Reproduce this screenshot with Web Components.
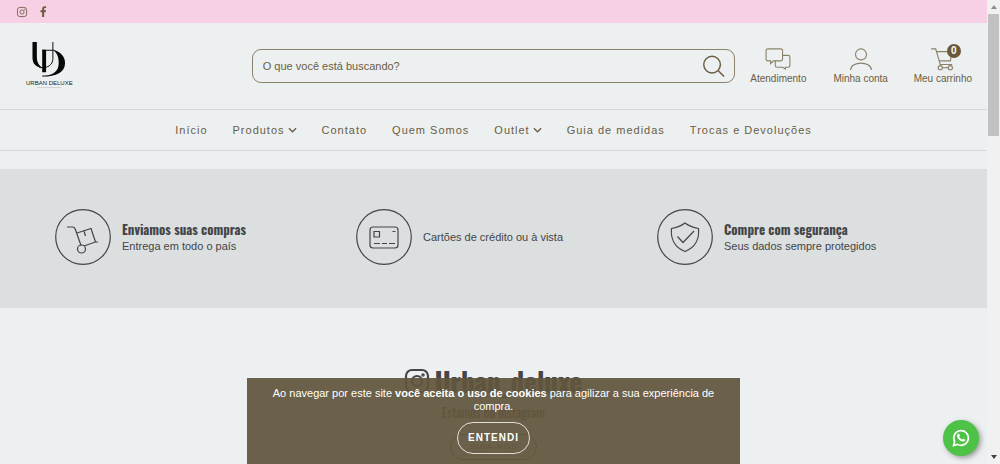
<!DOCTYPE html>
<html lang="pt-BR">
<head>
<meta charset="utf-8">
<title>Urban Deluxe</title>
<style>
html, body { margin: 0; height: 100%; }
body {
  --bg: #ecf0f1; --brown: #6b5d43; --ink: #444547; --line: #d5d8d8;
  --condensed: "Oswald", "Liberation Sans Narrow", "Liberation Sans", sans-serif;
  font: 11px/16px "Liberation Sans", Arial, sans-serif;
  color: var(--brown); background: var(--bg); overflow: hidden;
}
</style>
</head>
<body>
<shop-page>
  <top-bar></top-bar>
  <shop-header></shop-header>
  <shop-nav></shop-nav>
  <feature-band>
    <shop-feature icon="truck"><strong slot="title">Enviamos suas compras</strong>Entrega em todo o país</shop-feature>
    <shop-feature icon="card">Cartões de crédito ou à vista</shop-feature>
    <shop-feature icon="shield"><strong slot="title">Compre com segurança</strong>Seus dados sempre protegidos</shop-feature>
  </feature-band>
  <insta-section></insta-section>
  <cookie-notice slot="overlay">Ao navegar por este site <b>você aceita o uso de cookies</b> para agilizar a sua experiência de compra.</cookie-notice>
  <whats-button slot="overlay"></whats-button>
</shop-page>
<script>
const icons = {
  instagram: ['0 0 24 24', '<rect x="1" y="1" width="22" height="22" rx="6"/><circle cx="12" cy="12" r="5"/><circle cx="18" cy="6" r=".7" fill="currentColor"/>'],
  facebook: ['0 0 10 16', '<path stroke="none" fill="currentColor" d="M3 16V9H.6V6.2H3V4.1C3 1.6 4.4.3 6.6.3c1 0 2.1.2 2.1.2v2.3H7.5C6.3 2.8 6 3.500 6 4.3v1.9h2.7L8.200 9H6v7z"/>'],
  search: ['0 0 24 24', '<circle cx="10.500" cy="10" r="8.700"/><path d="M17 16.500l6 6"/>'],
  chat: ['0 0 28 24', '<path d="M3 1h14q2 0 2 2v9q0 2-2 2H9l-3 3v-3H3q-2 0-2-2V3q0-2 2-2z"/><path d="M19 8h6q2 0 2 2v9q0 2-2 2h-3v2l-3-2h-6q-2 0-2-2v-5"/>'],
  user: ['0 0 24 24', '<circle cx="12" cy="7" r="6"/><path d="M.5 24c1-10 22-10 23 0"/>'],
  cart: ['0 0 26 24', '<path d="M0 1h5l5 17h13M6 4h17l-2 10H9"/><circle cx="10" cy="21.500" r="2.300"/><circle cx="21" cy="21.500" r="2.300"/><path d="M12 21.500h7"/>'],
  chevron: ['0 0 10 6', '<path d="M1 1l4 4 4-4"/>'],
  truck: ['0 0 56 56', '<circle cx="28" cy="28" r="27.300"/><path d="M12 18h5.500q2 0 2.700 2L26 36.500M22 24l14-4.500L40.500 33 29 37M29 22l1.500 5M40 33h3"/><circle cx="26.500" cy="40" r="4"/>'],
  card: ['0 0 56 56', '<circle cx="28" cy="28" r="27.300"/><rect x="14" y="18" width="28" height="21" rx="3"/><path d="M18 22.500h5.500v5.500H18zM36.500 22.500h3M18 34.500h6M26 34.500h5M33 34.500h6"/>'],
  shield: ['0 0 56 56', '<circle cx="28" cy="28" r="27.300"/><path d="M28 14c4 3 8 4.500 13.500 5.500 1 10-3 19-13.500 23C17.500 38.500 13.500 29.500 14.500 19.500 20 18.500 24 17 28 14z"/><path d="M20.500 27.500l5.500 6L37 22"/>'],
  whatsapp: ['0 0 24 24', '<path stroke-width="2.200" d="M2 22l1.500-5.300A9.800 9.800 0 1 1 7.300 20.500z"/><path stroke="none" fill="currentColor" d="M8.200 6.600c.4-.4 1.200-.4 1.400.1l.9 2.100c.2.500-.9 1.300-.7 1.700.8 1.600 2 2.800 3.700 3.500.5.200 1.200-1.200 1.700-1l2.100 1c.5.300.4 1.200-.1 1.800-1 1.200-2.700 1.300-4.700.4-2.500-1.100-4.400-3-5.500-5.200-.8-1.800-.1-3.500 1.200-4.400z"/>'],
  logo: ['0 0 34 36', '<path stroke="none" fill="#080808" d="M0 0h4.500v16c0 5 2 8 5.500 10.500C3 26 0 22 0 16zM10 8h4v23h-4zM21 8c8 2 12.500 7 12.500 13.500C33.500 31 25 35.500 10 35.500v-1c11 0 17-4 17-13C27 15 25 11 21 8z"/><path stroke="#080808" stroke-width="1" d="M10 8.500h12M7 26.300c9 1 14-3 14-9.300V0"/>']
};
const define = (name, html, setup) => {
  const template = document.createElement('template');
  template.innerHTML = html;
  customElements.define(name, class extends HTMLElement {
    constructor() {
      super();
      this.attachShadow({ mode: 'open' }).append(template.content.cloneNode(true));
    }
    connectedCallback() { if (setup) setup(this, this.shadowRoot); }
  });
};
const fillIcon = (el, root) => {
  root.querySelector('.icon').innerHTML = '<ui-icon name="' + el.getAttribute('icon') + '"></ui-icon>';
};

define('ui-icon', `<style>
  :host { display: block; flex: none; }
  svg { display: block; width: 100%; height: 100%; fill: none; stroke: currentColor; stroke-width: var(--stroke, 1.2); overflow: visible; }
</style><svg aria-hidden="true"></svg>`, (el, root) => {
  const [box, shapes] = icons[el.getAttribute('name')];
  const svg = root.querySelector('svg');
  svg.setAttribute('viewBox', box);
  svg.innerHTML = shapes;
});

define('scroll-rail', `<style>
  :host { display: flex; flex-direction: column; align-items: center; width: 13px; flex: none; background: #f1f1f1; }
  i { border: 3px solid transparent; }
  .up { border-top: 0; border-bottom: 4px solid #8c8c8c; margin-top: 5px; }
  .down { border-bottom: 0; border-top: 4px solid #404040; margin-bottom: 5px; }
  .track { flex: 1; width: 11px; margin: 5px 0; }
  .thumb { height: 28%; background: #c1c1c1; }
</style><i class="up"></i><div class="track"><div class="thumb"></div></div><i class="down"></i>`);

define('shop-page', `<style>
  :host { display: flex; height: 100vh; }
  main { flex: 1; min-width: 0; position: relative; overflow: hidden; }
</style><main><slot></slot><slot name="overlay"></slot></main><scroll-rail></scroll-rail>`);

define('top-bar', `<style>
  :host { display: flex; align-items: center; gap: 13px; height: 23px; padding: 0 17px; background: #f7d0e6; }
  a { color: inherit; }
  .insta { width: 10px; height: 10px; --stroke: 2; }
  .face { width: 7px; height: 11px; }
</style><a href="#" aria-label="Instagram"><ui-icon class="insta" name="instagram"></ui-icon></a><a href="#" aria-label="Facebook"><ui-icon class="face" name="facebook"></ui-icon></a>`);

define('shop-logo', `<style>
  :host { display: block; }
  a { display: inline-flex; flex-direction: column; align-items: center; color: #222; text-decoration: none; font-size: 6px; line-height: 8px; }
  ui-icon { width: 34px; height: 35px; margin-bottom: 2px; }
  i { width: 24px; height: 1px; background: #d0d3d4; }
</style><a href="#"><ui-icon name="logo"></ui-icon>URBAN DELUXE<i></i></a>`);

define('search-box', `<style>
  :host { display: block; }
  form { display: flex; align-items: center; height: 34px; box-sizing: border-box; border: 1px solid #8d826b; border-radius: 9px; padding: 0 9px 0 10px; }
  input { flex: 1; min-width: 0; border: 0; padding: 0; background: none; outline: 0; font: inherit; color: inherit; }
  input::placeholder { color: inherit; opacity: 1; }
  button { border: 0; padding: 0; background: none; color: inherit; }
  ui-icon { width: 23px; height: 23px; --stroke: 1.5; }
</style><form><input aria-label="Buscar" placeholder="O que você está buscando?"><button type="button" aria-label="Buscar"><ui-icon name="search"></ui-icon></button></form>`);

define('header-link', `<style>
  :host { display: block; flex: 1; }
  a { display: flex; flex-direction: column; align-items: center; color: inherit; text-decoration: none; font-size: 10px; line-height: 14px; white-space: nowrap; }
  .pic { position: relative; margin-bottom: 2px; }
  .icon { width: 26px; height: 22px; color: #8b816b; }
  ui-icon { width: 100%; height: 100%; }
  ::slotted(*) { position: absolute; left: 17px; top: -4px; width: 14px; border-radius: 7px; background: #6b5838; color: #fff; font-weight: bold; text-align: center; }
</style><a href="#"><span class="pic"><div class="icon"></div><slot name="badge"></slot></span><slot></slot></a>`, fillIcon);

define('shop-header', `<style>
  :host { display: grid; grid-template-columns: 1fr 2fr 1fr; height: 86px; border-bottom: 1px solid var(--line); }
  shop-logo { padding: 19px 0 0 26px; }
  search-box { padding: 26px 5px 0; }
  nav { display: flex; padding-top: 25px; margin: 0 3px 0 -3px; }
</style><shop-logo></shop-logo><search-box></search-box>
<nav><header-link icon="chat">Atendimento</header-link><header-link icon="user">Minha conta</header-link><header-link icon="cart"><span slot="badge">0</span>Meu carrinho</header-link></nav>`);

define('shop-nav', `<style>
  :host { display: flex; justify-content: center; align-items: center; gap: 25px; height: 40px; border-bottom: 1px solid var(--line); }
  a { display: flex; align-items: center; gap: 3px; color: inherit; text-decoration: none; letter-spacing: 1px; white-space: nowrap; }
  ui-icon { width: 9px; height: 6px; --stroke: 1.5; }
</style><a href="#">Início</a><a href="#">Produtos <ui-icon name="chevron"></ui-icon></a><a href="#">Contato</a><a href="#">Quem Somos</a><a href="#">Outlet <ui-icon name="chevron"></ui-icon></a><a href="#">Guia de medidas</a><a href="#">Trocas e Devoluções</a>`);

define('feature-band', `<style>
  :host { display: grid; grid-template-columns: repeat(3, 1fr); margin-top: 18px; padding: 40px 42px 43px; background: #dbdfe0; color: var(--ink); }
</style><slot></slot>`);

define('shop-feature', `<style>
  :host { display: flex; align-items: center; gap: 11px; padding-left: 13px; }
  .icon { width: 56px; height: 56px; flex: none; }
  ::slotted(strong) { display: block; font: bold 13px/18px var(--condensed); }
</style><div class="icon"></div><div><slot name="title"></slot><slot></slot></div>`, fillIcon);

define('insta-section', `<style>
  :host { display: flex; flex-direction: column; align-items: center; padding-top: 57px; color: var(--ink); }
  h2 { display: flex; align-items: center; gap: 6px; margin: 0; font: bold 27px/32px var(--condensed); }
  ui-icon { width: 24px; height: 24px; --stroke: 2.2; }
  p { margin: 7px 0 14px; font: 13px/16px var(--condensed); }
  a { border: 1px solid var(--brown); border-radius: 13px; padding: 0 19px; line-height: 24px; color: var(--brown); text-decoration: none; font-size: 8px; letter-spacing: 1px; }
</style><h2><ui-icon name="instagram"></ui-icon>Urban_deluxe</h2><p>Estamos no Instagram</p><a href="#">SIGA-NOS</a>`);

define('cookie-notice', `<style>
  :host { position: absolute; bottom: 0; left: 25%; width: 50%; box-sizing: border-box; padding: 9px 20px 10px; background: rgb(97 85 60 / .93); color: #fff; text-align: center; line-height: 13px; }
  button { display: block; margin: 9px auto 0; height: 32px; padding: 0 10px; border: 1px solid #e2dfda; border-radius: 16px; background: none; color: inherit; font: bold 10px/16px "Liberation Sans", Arial, sans-serif; letter-spacing: 1px; }
</style><slot></slot><button>ENTENDI</button>`);

define('whats-button', `<style>
  :host { position: absolute; right: 8px; bottom: 8px; }
  a { display: grid; place-items: center; width: 36px; height: 36px; border-radius: 50%; background: #4dc247; color: #fff; box-shadow: 2px 2px 5px #999; }
  ui-icon { width: 18px; height: 18px; }
</style><a href="#" aria-label="WhatsApp"><ui-icon name="whatsapp"></ui-icon></a>`);
</script>
</body>
</html>
